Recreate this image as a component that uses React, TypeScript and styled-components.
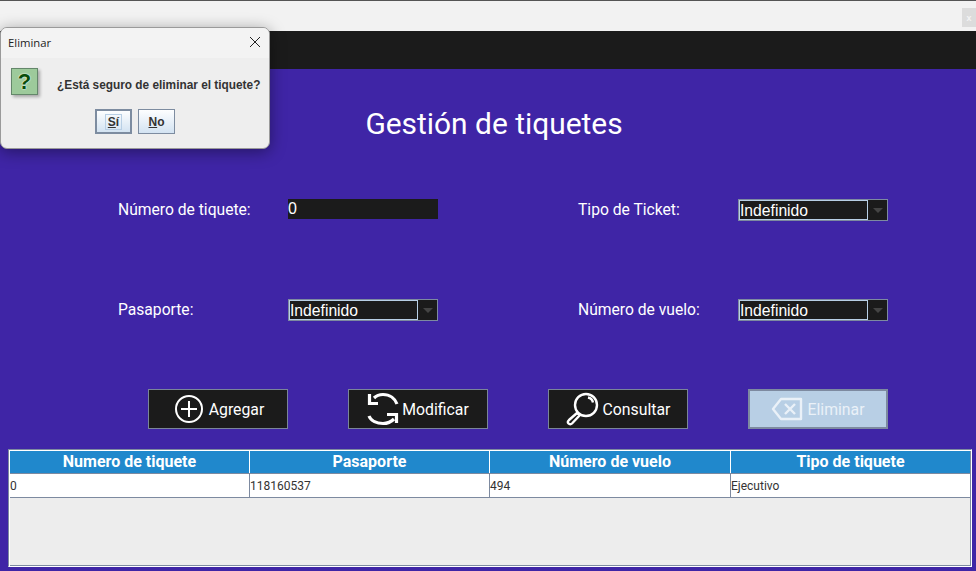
import React from "react";
import styled, { createGlobalStyle } from "styled-components";

const GlobalStyle = createGlobalStyle`
  html, body { margin: 0; padding: 0; background: #3f25a6; }
  body { font-family: Roboto, "Liberation Sans", sans-serif; overflow: hidden; }
  * { box-sizing: border-box; }
`;

const Page = styled.div`
  position: relative;
  width: 976px;
  height: 571px;
  overflow: hidden;
  display: flex;
  flex-direction: column;
  background: #3f25a6;
`;

const WindowBar = styled.div`
  height: 31px;
  flex: none;
  display: flex;
  justify-content: flex-end;
  padding-top: 7px;
  background: #f2f2f2;
  border-top: 1px solid #555;
`;

const CloseStub = styled.div`
  width: 14px;
  height: 19px;
  display: flex;
  align-items: center;
  justify-content: center;
  background: #dcdcdc;
  color: #f4f4f4;
  font: 700 9px "Liberation Sans", sans-serif;
`;

const BlackBar = styled.div`
  height: 38px;
  flex: none;
  background: #1b1b1b;
`;

const Title = styled.h1`
  margin: 35px 0 0;
  height: 40px;
  text-align: center;
  color: #fff;
  font-size: 29.9px;
  font-weight: 400;
  line-height: 40px;
  padding-left: 12px;
`;

const Form = styled.div`
  display: grid;
  grid-template-columns: 170px 150px 140px 160px 150px;
  grid-auto-rows: 21px;
  row-gap: 79px;
  margin: 55px 0 0 118px;
  align-items: start;
`;

const Label = styled.label<{ $second?: boolean }>`
  grid-column: ${(p) => (p.$second ? 4 : 1)};
  color: #fff;
  font-size: 15.65px;
  line-height: 22px;
`;

const TextField = styled.div`
  height: 20px;
  padding-left: 0;
  background: #1b1b1b;
  color: #fff;
  font: 16px/19px "Liberation Sans", sans-serif;
`;

const Combo = styled.div`
  height: 22px;
  display: flex;
  background: #1b1b1b;
  border: 1px solid #7d8aa0;
`;

const ComboValue = styled.div`
  flex: 1;
  border: 1px solid #b8cfe5;
  color: #fff;
  padding-left: 0;
  margin-left: 0;
  font: 15.7px/19px "Liberation Sans", sans-serif;
`;

const ComboArrow = styled.div`
  width: 19px;
  display: flex;
  align-items: center;
  justify-content: center;
  &::before {
    content: "";
    margin-top: 1px;
    border-left: 5px solid transparent;
    border-right: 5px solid transparent;
    border-top: 5px solid #444;
  }
`;

const Actions = styled.div`
  display: flex;
  gap: 60px;
  margin: 69px 0 0 148px;
`;

const ActionButton = styled.button<{ $disabled?: boolean; $gap: number; $shift?: number }>`
  width: 140px;
  height: 40px;
  padding: 0 0 0 ${(p) => p.$shift ?? 0}px;
  display: flex;
  align-items: center;
  justify-content: center;
  gap: ${(p) => p.$gap}px;
  border: ${(p) => (p.$disabled ? "2px solid #7d8aa0" : "1px solid #7a8599")};
  background: ${(p) => (p.$disabled ? "#b8cfe5" : "#1b1b1b")};
  color: ${(p) => (p.$disabled ? "#eaf1f8" : "#fff")};
  font-family: Roboto, sans-serif;
  font-size: 15.8px;
  svg { flex: none; }
`;

const TableBox = styled.div`
  margin: 20px 0 0 8px;
  width: 964px;
  height: 118px;
  display: flex;
  flex-direction: column;
  background: #ededed;
  border: 1px solid;
  border-color: #7d8aa0 #fff #fff #7d8aa0;
  box-shadow: inset 1px 1px #fff, inset -1px -1px #7d8aa0;
  padding: 1px;
`;

const TableRow = styled.div<{ $head?: boolean }>`
  display: grid;
  grid-template-columns: 240px 240px 241px 1fr;
  height: ${(p) => (p.$head ? "23px" : "24px")};
  background: ${(p) => (p.$head ? "#2088cc" : "#fff")};
  border-bottom: 1px solid #7d8aa0;
  flex: none;
`;

const HeadCell = styled.div`
  text-align: center;
  color: #fff;
  font-size: 16px;
  font-weight: 700;
  line-height: 22px;
  border-right: 1px solid #fff;
  &:last-child { border-right: none; }
`;

const Cell = styled.div`
  padding-left: 0;
  color: #333;
  font: 12px/24px Roboto, sans-serif;
  border-right: 1px solid #7d8aa0;
  &:last-child { border-right: none; }
`;

const Dialog = styled.div`
  position: absolute;
  left: 0;
  top: 27px;
  width: 270px;
  height: 122px;
  display: flex;
  flex-direction: column;
  background: #eeeeee;
  border: 1px solid #9a9a9a;
  border-radius: 7px;
  box-shadow: 0 3px 16px rgba(0, 0, 0, 0.4);
  overflow: hidden;
`;

const DialogTitle = styled.div`
  height: 30px;
  flex: none;
  display: flex;
  align-items: center;
  justify-content: space-between;
  padding: 0 8px 2px 7px;
  background: #f3f3f3;
  color: #222;
  font: 11.3px "Open Sans", "Liberation Sans", sans-serif;
`;

const DialogBody = styled.div`
  display: flex;
  gap: 19px;
  padding: 10px 0 0 10px;
`;

const QuestionIcon = styled.div`
  width: 27px;
  height: 27px;
  flex: none;
  display: flex;
  align-items: center;
  justify-content: center;
  background: #9dca9b;
  border: 1px solid #64876a;
  box-shadow: 2px 2px 3px rgba(0, 0, 0, 0.3);
  color: #0a4d0a;
  font: 900 22px/1 "Liberation Sans", sans-serif;
  text-shadow: 0 0 1px #e8f5e8, 0 0 1px #e8f5e8, 0 0 2px #e8f5e8;
`;

const DialogText = styled.div`
  margin-top: 9px;
  color: #333;
  font: 700 11.85px/16px "Liberation Sans", sans-serif;
`;

const DialogButtons = styled.div`
  display: flex;
  justify-content: center;
  gap: 6px;
  margin-top: 14px;
  padding-right: 1px;
`;

const DialogButton = styled.button<{ $focus?: boolean }>`
  width: 37px;
  height: 25px;
  padding: 1px 0 0 1px;
  display: flex;
  align-items: center;
  justify-content: center;
  border: ${(p) => (p.$focus ? "2px solid #7d8ca0" : "1px solid #7d8ca0")};
  background: linear-gradient(#fdfeff, #d3e3f2);
  color: #333;
  font: 700 12px "Liberation Sans", sans-serif;
  u { text-decoration: underline; }
`;

const FocusText = styled.span`
  padding: 0 2px;
  border: 1px solid #b8cfe5;
`;

const headers = ["Numero de tiquete", "Pasaporte", "Número de vuelo", "Tipo de tiquete"];
const cells = ["0", "118160537", "494", "Ejecutivo"];

const PlusIcon = () => (
  <svg width="28" height="28" viewBox="0 0 28 28" fill="none" stroke="#fff" strokeWidth="2">
    <circle cx="14" cy="14" r="13" />
    <path d="M14 6v16M6 14h16" />
  </svg>
);

const RefreshIcon = () => (
  <svg width="32" height="34" viewBox="0 0 32 34" fill="none" stroke="#fff" strokeWidth="3.2">
    <path d="M7 6c3-3 6-3.500 9-3.500 7 0 12 4.500 14 9.500" />
    <path d="M2.500 2v9.500H11" />
    <path d="M2 24c2 5 8 7.500 14 7.500 4 0 8-1.500 11-4.500" />
    <path d="M20 22.500h9.500V31" />
  </svg>
);

const SearchIcon = () => (
  <svg width="33" height="34" viewBox="0 0 33 34" fill="none" stroke="#fff" strokeWidth="2.4">
    <circle cx="20" cy="13" r="11" />
    <path d="M22 5.500c2.500.5 4.500 2.500 5 5" />
    <path d="M3 28l8-7 2.500 2.500-7.500 8c-1 1-2.500 1-3.500 0s-.5-2.500.5-3.500z" />
  </svg>
);

const BackspaceIcon = () => (
  <svg width="32" height="24" viewBox="0 0 32 24" fill="none" stroke="#eaf1f8" strokeWidth="2.400">
    <path d="M10 2h20v20H10L2 12z" strokeLinejoin="round" />
    <path d="M14 7l10 10M24 7L14 17" />
  </svg>
);

const DialogClose = () => (
  <svg width="12" height="12" viewBox="0 0 12 12" stroke="#222" strokeWidth="1" fill="none">
    <path d="M1 1l10 10M11 1L1 11" />
  </svg>
);

export default function App() {
  return (
    <Page>
      <GlobalStyle />
      <WindowBar>
        <CloseStub>x</CloseStub>
      </WindowBar>
      <BlackBar />
      <Title>Gestión de tiquetes</Title>
      <Form>
        <Label>Número de tiquete:</Label>
        <TextField>0</TextField>
        <Label $second>Tipo de Ticket:</Label>
        <Combo>
          <ComboValue>Indefinido</ComboValue>
          <ComboArrow />
        </Combo>
        <Label>Pasaporte:</Label>
        <Combo>
          <ComboValue>Indefinido</ComboValue>
          <ComboArrow />
        </Combo>
        <Label $second>Número de vuelo:</Label>
        <Combo>
          <ComboValue>Indefinido</ComboValue>
          <ComboArrow />
        </Combo>
      </Form>
      <Actions>
        <ActionButton $gap={6} $shift={3}>
          <PlusIcon />
          Agregar
        </ActionButton>
        <ActionButton $gap={3}>
          <RefreshIcon />
          Modificar
        </ActionButton>
        <ActionButton $gap={4}>
          <SearchIcon />
          Consultar
        </ActionButton>
        <ActionButton $disabled $gap={4}>
          <BackspaceIcon />
          Eliminar
        </ActionButton>
      </Actions>
      <TableBox>
        <TableRow $head>
          {headers.map((h) => (
            <HeadCell key={h}>{h}</HeadCell>
          ))}
        </TableRow>
        <TableRow>
          {cells.map((c) => (
            <Cell key={c}>{c}</Cell>
          ))}
        </TableRow>
      </TableBox>
      <Dialog>
        <DialogTitle>
          Eliminar
          <DialogClose />
        </DialogTitle>
        <DialogBody>
          <QuestionIcon>?</QuestionIcon>
          <DialogText>¿Está seguro de eliminar el tiquete?</DialogText>
        </DialogBody>
        <DialogButtons>
          <DialogButton $focus>
            <FocusText>
              <u>S</u>í
            </FocusText>
          </DialogButton>
          <DialogButton>
            <u>N</u>o
          </DialogButton>
        </DialogButtons>
      </Dialog>
    </Page>
  );
}
